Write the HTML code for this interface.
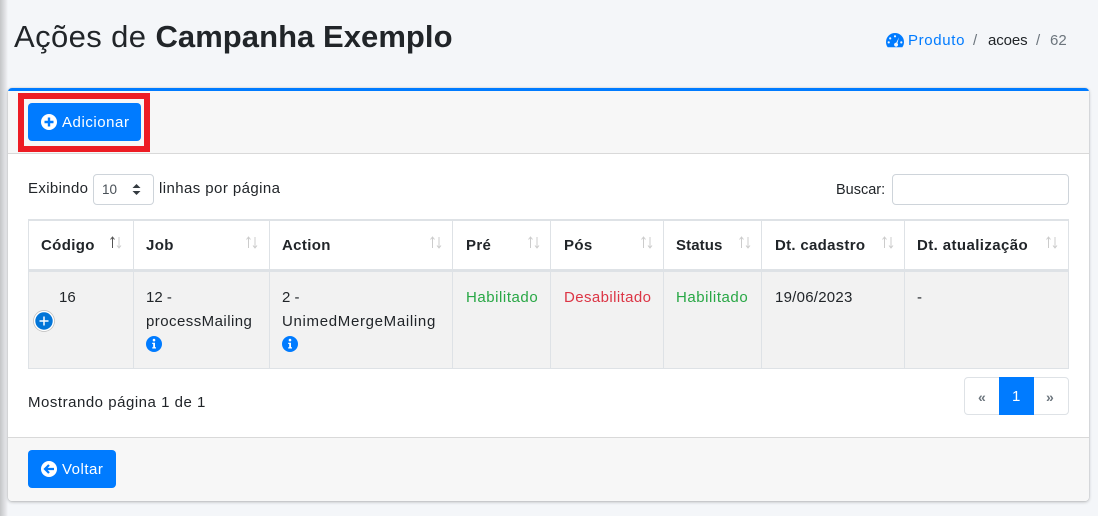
<!DOCTYPE html>
<html lang="pt"><head><meta charset="utf-8"><title>Ações</title>
<style>
html,body{margin:0;padding:0}
body{width:1098px;height:516px;overflow:hidden;position:relative;background:#f4f6f9;font-family:"Liberation Sans",sans-serif;font-size:15px;color:#212529}
.a{position:absolute;white-space:nowrap}
.t{position:absolute;white-space:nowrap;line-height:20px}
.b{font-weight:700;letter-spacing:.35px}
.v{position:absolute;width:1px;background:#dee2e6;top:221px;height:147px}
.so{position:absolute;top:235px;width:18px;height:15px}
</style></head><body>
<div class="a" style="left:0;top:0;width:8px;height:516px;background:linear-gradient(90deg,#c4c5c7,#e4e5e8 70%,#f4f6f9)"></div>
<div class="t" style="left:14px;top:19px;font-size:31px;line-height:36px;letter-spacing:.4px;color:#212529">Ações de <b style="letter-spacing:.05px">Campanha Exemplo</b></div>

<svg class="a" style="left:886px;top:33px" width="18" height="15" viewBox="0 0 18 15"><path fill="#007bff" fill-rule="evenodd" d="M9 0a9 9 0 0 1 9 9c0 2-.6 3.900-1.700 5.300H1.700A9 9 0 0 1 0 9a9 9 0 0 1 9-9zM9 2.200a1.100 1.100 0 1 0 0 2.200 1.100 1.100 0 0 0 0-2.200zM4.200 4.300a1.100 1.100 0 1 0 0 2.200 1.100 1.100 0 0 0 0-2.200zM2.700 8.300a1.100 1.100 0 1 0 0 2.200 1.100 1.100 0 0 0 0-2.200zM15.300 8.300a1.100 1.100 0 1 0 0 2.200 1.100 1.100 0 0 0 0-2.200zM13 4.200l-2.800 5.500a2 2 0 1 0 1.200.5z"/></svg>
<div class="t" style="left:908px;top:31px;color:#007bff;letter-spacing:.65px">Produto</div>
<div class="t" style="left:973px;top:31px;color:#6c757d">/</div>
<div class="t" style="left:988px;top:31px;letter-spacing:-.1px">acoes</div>
<div class="t" style="left:1036px;top:31px;color:#6c757d">/</div>
<div class="t" style="left:1050px;top:31px;color:#6c757d">62</div>

<div class="a" style="left:8px;top:88px;width:1081px;height:413px;background:#fff;border-radius:4px;box-shadow:0 0 1px rgba(0,0,0,.2),0 1px 3px rgba(0,0,0,.25);overflow:hidden">
  <div class="a" style="left:0;top:0;width:1081px;height:3px;background:#007bff"></div>
  <div class="a" style="left:0;top:3px;width:1081px;height:62px;background:#f7f7f7;border-bottom:1px solid #d9d9d9"></div>
  <div class="a" style="left:0;top:349px;width:1081px;height:64px;background:#f7f7f7;border-top:1px solid #d9d9d9"></div>
</div>

<div class="a" style="left:18px;top:93px;width:120px;height:47px;border:6px solid #ed1c24"></div>
<div class="a" style="left:28px;top:103px;width:113px;height:38px;background:#007bff;border-radius:4px"></div>
<svg class="a" style="left:41px;top:114px" width="16" height="16" viewBox="0 0 16 16"><circle cx="8" cy="8" r="8" fill="#fff"/><path d="M8 3.500v9M3.500 8h9" stroke="#007bff" stroke-width="2.400"/></svg>
<div class="t" style="left:62px;top:113px;color:#fff;letter-spacing:.55px">Adicionar</div>

<div class="t" style="left:28px;top:179px;letter-spacing:.35px">Exibindo</div>
<div class="a" style="left:93px;top:174px;width:59px;height:29px;border:1px solid #ced4da;border-radius:4px;background:#fff"></div>
<div class="t" style="left:102px;top:180px;font-size:13.500px;color:#495057">10</div>
<svg class="a" style="left:132px;top:184px" width="9" height="11" viewBox="0 0 9 11"><path d="M4.500 0L8.500 4H.5zM4.500 11L.5 7h8z" fill="#343a40"/></svg>
<div class="t" style="left:159px;top:179px;letter-spacing:.42px">linhas por página</div>
<div class="t" style="left:836px;top:180px;font-size:14.500px">Buscar:</div>
<div class="a" style="left:892px;top:174px;width:175px;height:29px;border:1px solid #ced4da;border-radius:4px;background:#fff"></div>

<div class="a" style="left:28px;top:219px;width:1041px;height:2px;background:#dee2e6"></div>
<div class="a" style="left:28px;top:272px;width:1041px;height:96px;background:#f2f2f2"></div>
<div class="a" style="left:28px;top:269px;width:1041px;height:3px;background:#dee2e6"></div>
<div class="a" style="left:28px;top:368px;width:1041px;height:1px;background:#dee2e6"></div>
<div class="v" style="left:28px"></div><div class="v" style="left:133px"></div><div class="v" style="left:269px"></div><div class="v" style="left:452px"></div><div class="v" style="left:550px"></div><div class="v" style="left:663px"></div><div class="v" style="left:761px"></div><div class="v" style="left:904px"></div><div class="v" style="left:1068px"></div>

<div class="t b" style="left:41px;top:236px">Código</div>
<div class="t b" style="left:146px;top:236px">Job</div>
<div class="t b" style="left:282px;top:236px">Action</div>
<div class="t b" style="left:466px;top:236px">Pré</div>
<div class="t b" style="left:564px;top:236px">Pós</div>
<div class="t b" style="left:676px;top:236px;letter-spacing:.1px">Status</div>
<div class="t b" style="left:775px;top:236px;letter-spacing:.3px">Dt. cadastro</div>
<div class="t b" style="left:917px;top:236px;letter-spacing:.4px">Dt. atualização</div>

<svg class="so" style="left:109px" viewBox="0 0 18 15" fill="none" stroke-width="1"><path d="M3.500 13V2M1.500 4.500L3.500 2l2 2.500" stroke="#555"/><path d="M10 2v11M8 10.500L10 13l2-2.500" stroke="#ccc"/></svg>
<svg class="so" style="left:245px" viewBox="0 0 18 15" fill="none" stroke="#ccc" stroke-width="1"><path d="M3.500 13V2M1.500 4.500L3.500 2l2 2.500M10 2v11M8 10.500L10 13l2-2.500"/></svg>
<svg class="so" style="left:429px" viewBox="0 0 18 15" fill="none" stroke="#ccc" stroke-width="1"><path d="M3.500 13V2M1.500 4.500L3.500 2l2 2.500M10 2v11M8 10.500L10 13l2-2.500"/></svg>
<svg class="so" style="left:527px" viewBox="0 0 18 15" fill="none" stroke="#ccc" stroke-width="1"><path d="M3.500 13V2M1.500 4.500L3.500 2l2 2.500M10 2v11M8 10.500L10 13l2-2.500"/></svg>
<svg class="so" style="left:640px" viewBox="0 0 18 15" fill="none" stroke="#ccc" stroke-width="1"><path d="M3.500 13V2M1.500 4.500L3.500 2l2 2.500M10 2v11M8 10.500L10 13l2-2.500"/></svg>
<svg class="so" style="left:738px" viewBox="0 0 18 15" fill="none" stroke="#ccc" stroke-width="1"><path d="M3.500 13V2M1.500 4.500L3.500 2l2 2.500M10 2v11M8 10.500L10 13l2-2.500"/></svg>
<svg class="so" style="left:881px" viewBox="0 0 18 15" fill="none" stroke="#ccc" stroke-width="1"><path d="M3.500 13V2M1.500 4.500L3.500 2l2 2.500M10 2v11M8 10.500L10 13l2-2.500"/></svg>
<svg class="so" style="left:1045px" viewBox="0 0 18 15" fill="none" stroke="#ccc" stroke-width="1"><path d="M3.500 13V2M1.500 4.500L3.500 2l2 2.500M10 2v11M8 10.500L10 13l2-2.500"/></svg>

<div class="t" style="left:59px;top:288px">16</div>
<svg class="a" style="left:33px;top:310px" width="22" height="22" viewBox="0 0 22 22"><circle cx="11" cy="11" r="9.700" fill="#0275d8" stroke="#fff" stroke-width="2"/><circle cx="11" cy="11" r="10.500" fill="none" stroke="#bbb" stroke-width=".7"/><path d="M11 6.500v9M6.500 11h9" stroke="#fff" stroke-width="1.500"/></svg>

<div class="t" style="left:146px;top:288px">12 -</div>
<div class="t" style="left:146px;top:312px;letter-spacing:.45px">processMailing</div>
<svg class="a" style="left:146px;top:336px" width="16" height="16" viewBox="0 0 16 16"><circle cx="8" cy="8" r="8" fill="#007bff"/><path d="M8 2.800a1.300 1.300 0 1 1 0 2.600 1.300 1.300 0 0 1 0-2.600zM6.200 6.700h2.800v4.500h1v1.300H6.200v-1.300h1V8h-1z" fill="#fff"/></svg>
<div class="t" style="left:282px;top:288px">2 -</div>
<div class="t" style="left:282px;top:312px;letter-spacing:.68px">UnimedMergeMailing</div>
<svg class="a" style="left:282px;top:336px" width="16" height="16" viewBox="0 0 16 16"><circle cx="8" cy="8" r="8" fill="#007bff"/><path d="M8 2.800a1.300 1.300 0 1 1 0 2.600 1.300 1.300 0 0 1 0-2.600zM6.200 6.700h2.800v4.500h1v1.300H6.200v-1.300h1V8h-1z" fill="#fff"/></svg>
<div class="t" style="left:466px;top:288px;color:#28a745;letter-spacing:.55px">Habilitado</div>
<div class="t" style="left:564px;top:288px;color:#dc3545;letter-spacing:.4px">Desabilitado</div>
<div class="t" style="left:676px;top:288px;color:#28a745;letter-spacing:.55px">Habilitado</div>
<div class="t" style="left:775px;top:288px;font-size:15px;letter-spacing:.25px">19/06/2023</div>
<div class="t" style="left:917px;top:288px">-</div>

<div class="t" style="left:28px;top:393px;letter-spacing:.52px">Mostrando página 1 de 1</div>

<div class="a" style="left:964px;top:377px;width:103px;height:36px;border:1px solid #dee2e6;border-radius:4px;background:#fff"></div>
<div class="a" style="left:999px;top:377px;width:35px;height:38px;background:#007bff"></div>
<div class="t" style="left:978px;top:387px;font-size:14px;color:#6c757d;font-weight:700">«</div>
<div class="t" style="left:1012px;top:387px;color:#fff">1</div>
<div class="t" style="left:1046px;top:387px;font-size:14px;color:#6c757d;font-weight:700">»</div>

<div class="a" style="left:28px;top:450px;width:88px;height:38px;background:#007bff;border-radius:4px"></div>
<svg class="a" style="left:41px;top:461px" width="16" height="16" viewBox="0 0 16 16"><circle cx="8" cy="8" r="8" fill="#fff"/><path d="M13 8H4.500M8 4L4 8l4 4" fill="none" stroke="#007bff" stroke-width="2.200"/></svg>
<div class="t" style="left:62px;top:460px;color:#fff;letter-spacing:.5px">Voltar</div>
</body></html>
